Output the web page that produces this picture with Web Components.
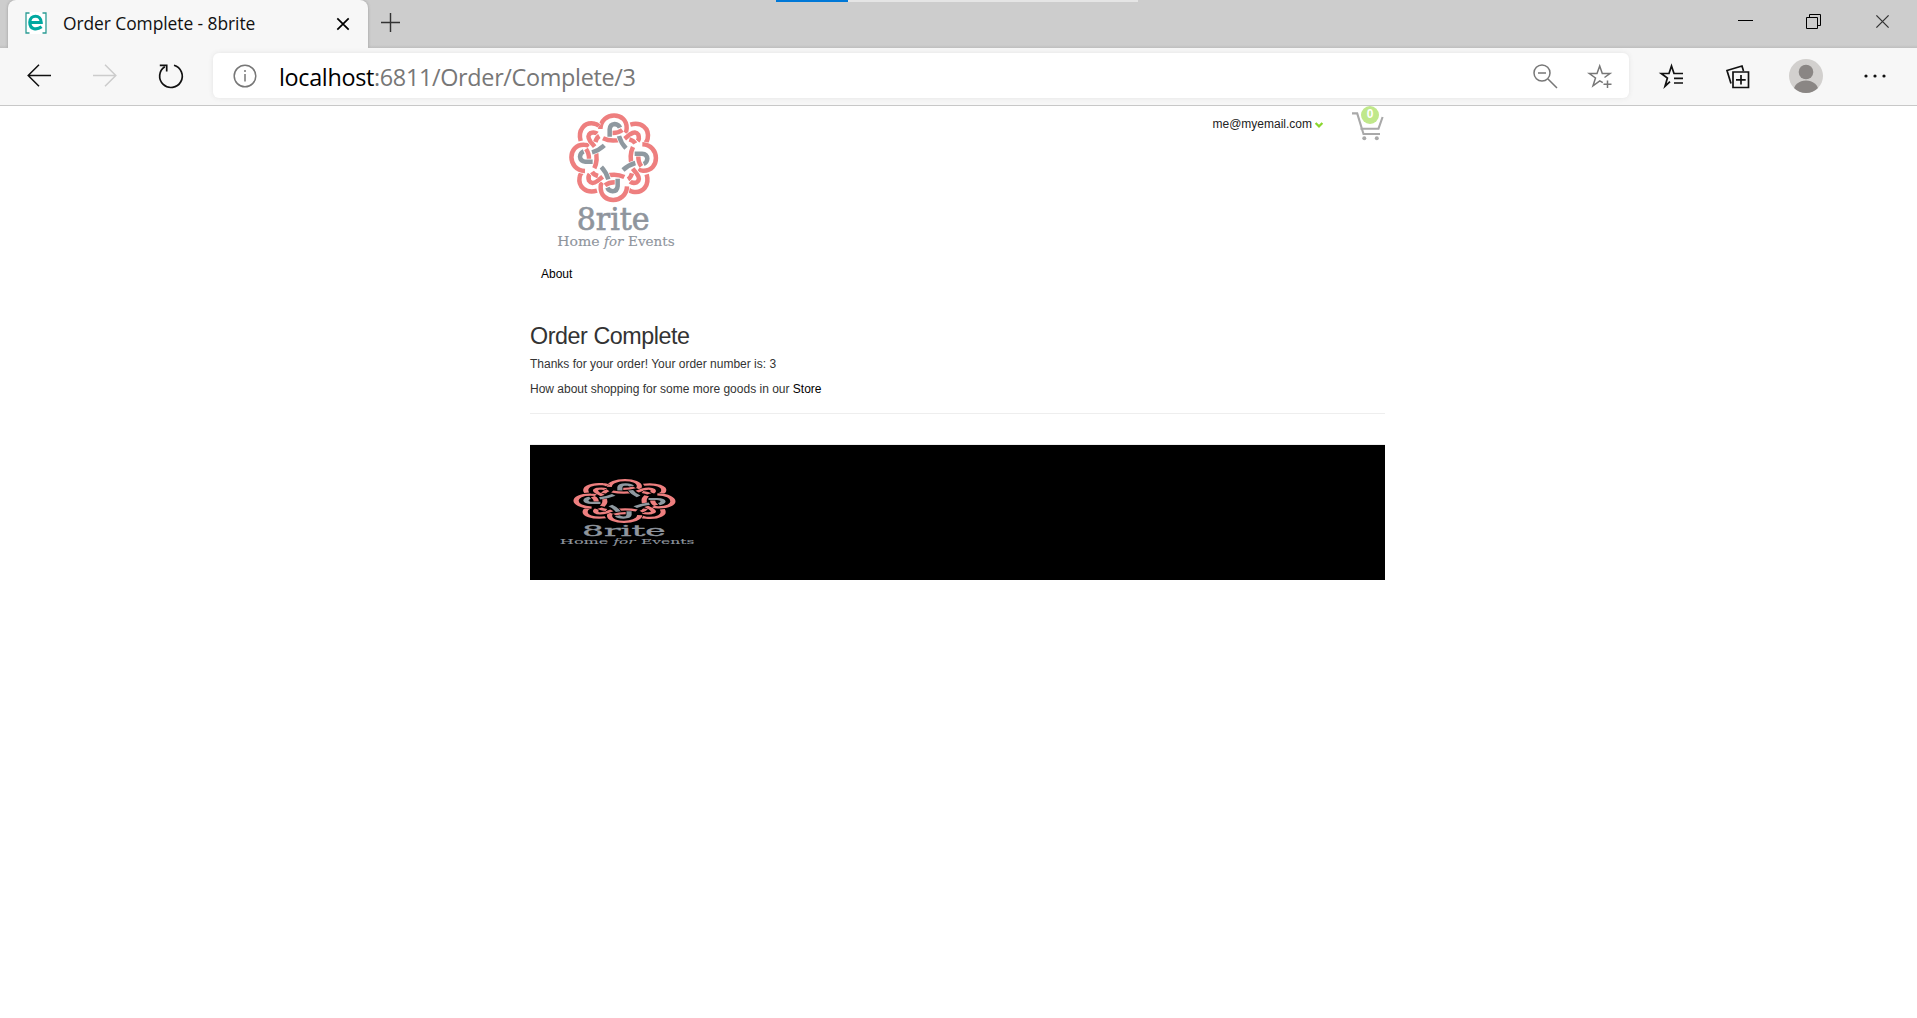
<!DOCTYPE html>
<html lang="en">
<head>
<meta charset="utf-8">
<title>Order Complete - 8brite</title>
<style>
html,body{margin:0;height:100%;background:#fff;overflow:hidden}
</style>
</head>
<body>
<browser-window></browser-window>
<script>
const define=(name,html,init)=>customElements.define(name,class extends HTMLElement{
  constructor(){super();this.attachShadow({mode:'open'}).innerHTML=html;if(init)init(this)}
});

const turn=[0,90,180,270];
const each=f=>turn.map(a=>`<g transform="rotate(${a} 221 158)">${f}</g>`).join('');
const strand=(d,c)=>`<path class="gap" d="${d}"/><path class="${c}" d="${d}"/>`;
const quarterRings=strand('M181 72C183 18 262 18 260 70Q260 79 256 84M245 103Q214 112 189 100','pink')
 +strand('M271 59C303 50 329 69 323 101Q322 108 316 114','pink');
const quarterHooks=strand('M237 93Q243 114 258 130','gray')
 +strand('M254 101L270 88Q287 76 295 89Q299 100 293 109','pink')
 +strand('M247 75Q234 85 215 84','pink')
 +strand('M209 95V73Q210 58 224 57Q236 58 240 68','gray')
 +strand('M286 115Q281 107 268 103','pink');

define('brand-logo',`<style>
:host{display:block}svg{display:block;width:100%;height:100%}
path{fill:none;stroke-width:13.5}.gap{stroke:var(--gap,#fff);stroke-width:17.5}.pink{stroke:#ee7f7f}.gray{stroke:#8f99a0}
text{font-family:"DejaVu Serif",serif;fill:#8f959d;stroke:#8f959d;stroke-width:.4}.name{stroke-width:2}
</style><svg viewBox="0 0 450 450" preserveAspectRatio="none">${each(quarterRings)}${each(quarterHooks)}
<text class="name" x="110" y="374" font-size="94" textLength="219" lengthAdjust="spacingAndGlyphs">8rite</text>
<text x="52" y="422" font-size="39" textLength="127" lengthAdjust="spacingAndGlyphs">Home</text>
<text x="192" y="422" font-size="39" font-style="italic" textLength="58" lengthAdjust="spacingAndGlyphs">for</text>
<text x="264" y="422" font-size="39" textLength="140" lengthAdjust="spacingAndGlyphs">Events</text></svg>`);

const shapes={
 back:['0 0 24 24','<path d="M24 11.5H1M12 .8L1.2 11.5L12 22.2"/>'],
 forward:['0 0 24 24','<path d="M0 11.5H23M12 .8L22.8 11.5L12 22.2"/>'],
 reload:['0 0 26 26','<path d="M16 2.3A11.3 11.3 0 1 1 6.8 3.7M1.8 2.4H8.7V8.5"/>'],
 info:['0 0 24 24','<circle cx="12" cy="12" r="10.8"/><path d="M12 10V17.5M12 6V8"/>'],
 close:['0 0 14 14','<path d="M1.3 1.3L12.7 12.7M12.7 1.3L1.3 12.7"/>'],
 plus:['0 0 20 20','<path d="M0 10H20M10 0V20"/>'],
 zoomout:['0 0 25 25','<circle cx="9" cy="9" r="8"/><path d="M5 9H13M15 15L24 24"/>'],
 staradd:['0 0 24 24','<path d="M14.8 17.6L11.8 15.8L5 20.8L7.5 13L1.3 8.5H9L11.7 1L14.3 8.5H22L16.5 12.5M19.5 15.5V23M15.5 19.3H23.5"/>'],
 starlist:['0 0 24 24','<path d="M10 16.6L5 21.2L7.4 13L1.3 8.5H9L11.5 1L14 8.5H23M14 13.3H23M14 18H23"/>'],
 collections:['0 0 24 24','<path d="M5 18.5L1 5.5L16 1L17.5 6M7 7H22.5V22.5H7ZM15 10V19.5M10 14.8H19.7"/>'],
 more:['0 0 22 6','<g stroke="none" fill="currentColor"><circle cx="2" cy="3" r="1.6"/><circle cx="11" cy="3" r="1.6"/><circle cx="20" cy="3" r="1.6"/></g>'],
 minimize:['0 0 15 15','<path d="M0 7.5H15"/>'],
 restore:['0 0 16 16','<path d="M.5 3.5H11.5V14.5H.5ZM3.5 3.5V.5H14.5V11.5H11.5"/>'],
 chevron:['0 0 8 6','<path d="M.6 1L4 4.4L7.4 1"/>'],
 cart:['0 0 32 29','<path d="M0 1.4H5.2L11.5 22H28M8.4 16.7H26.5L30.6 5"/><g stroke="none" fill="currentColor"><circle cx="12.3" cy="26.3" r="2"/><circle cx="24.8" cy="26.3" r="2"/></g>'],
 profile:['0 0 34 34','<defs><clipPath id="c"><circle cx="17" cy="17" r="17"/></clipPath></defs><g stroke="none" clip-path="url(#c)"><rect width="34" height="34" fill="#d2d0ce"/><circle cx="17" cy="13" r="7.3" fill="#8a8684"/><ellipse cx="17" cy="32" rx="12.4" ry="10.5" fill="#8a8684"/></g>'],
 favicon:['0 0 22 22','<rect width="22" height="22" fill="#fff" stroke="none"/><path stroke="#2a9b93" stroke-width="1.3" d="M4.5 1H1V21H4.5M17.5 1H21V21H17.5"/><path stroke="#00a8a0" stroke-width="3.2" d="M5 10.5H16.2C16.2 2.2 5 2.2 4.8 10.3C4.8 18 12 18.2 16.6 14.8"/>']
};
customElements.define('line-icon',class extends HTMLElement{
 constructor(){super();this.attachShadow({mode:'open'})}
 connectedCallback(){const [box,body]=shapes[this.getAttribute('name')];
  this.shadowRoot.innerHTML=`<style>:host{display:block;flex:none}svg{display:block;width:100%;height:100%;overflow:visible;fill:none;stroke:currentColor;stroke-width:var(--w,1.5)}</style><svg viewBox="${box}">${body}</svg>`}
});

define('tab-strip',`<style>
:host{display:flex;height:48px;box-sizing:border-box;background:linear-gradient(#cdcdcd 45px,#bebebe);padding-left:8px;position:relative;font:18px "Open Sans","Noto Sans",sans-serif}
.tab{width:360px;box-sizing:border-box;background:#f7f7f7;border-radius:8px 8px 0 0;padding:0 18px 0 17px;display:flex;align-items:center;box-shadow:0 0 3px #999;clip-path:inset(0 -4px 0 -4px)}
.tab span{font-size:17.4px;color:#111;margin:-2px 0 0 16px;flex:1;white-space:nowrap;letter-spacing:-.06px}
.new{width:19px;height:19px;margin:13px 0 0 13px;color:#333}
.controls{margin-left:auto;display:flex;gap:53px;padding:14px 27px 0 0;--w:1}
.controls line-icon{width:15px;height:15px}
.progress{position:absolute;left:776px;top:0;width:362px;height:2px;background:linear-gradient(90deg,#0078d7 72px,#e5e5e5 72px)}
</style><div class="tab"><line-icon name="favicon" style="width:22px;height:22px;margin-top:-2px"></line-icon><span>Order Complete - 8brite</span><line-icon name="close" style="width:14px;height:14px;--w:1.7"></line-icon></div>
<line-icon class="new" name="plus"></line-icon>
<div class="controls"><line-icon name="minimize" style="margin-top:-1px"></line-icon><line-icon name="restore" style="width:16px;height:16px"></line-icon><line-icon name="close" style="color:#333;--w:1.2"></line-icon></div><div class="progress"></div>`);

define('address-bar',`<style>
:host{display:flex;width:1416px;height:45px;box-sizing:border-box;align-items:center;background:#fff;border-radius:6px;box-shadow:0 0 5px #e3e3e3;padding:0 17px 0 20px;color:#777}
p{margin:3px auto 0 22px;font:23.4px "Open Sans","Noto Sans",sans-serif;white-space:nowrap;letter-spacing:-.33px}b{font-weight:400;color:#000}
</style><line-icon name="info" style="width:24px;height:24px"></line-icon><p><b>localhost</b>:6811/Order/Complete/3</p>
<line-icon name="zoomout" style="width:25px;height:25px;margin-top:1px"></line-icon><line-icon name="staradd" style="width:24px;height:24px;margin:2px 0 0 30px"></line-icon>`);

define('tool-bar',`<style>
:host{display:flex;height:58px;box-sizing:border-box;align-items:center;background:#f7f7f7;border-bottom:1px solid #c8c8c8;padding:0 31px 2px 27px;color:#111}
address-bar{margin:0 31px 0 29px}
</style><line-icon name="back" style="width:24px;height:24px"></line-icon>
<line-icon name="forward" style="width:24px;height:24px;margin-left:42px;color:#ccc"></line-icon>
<line-icon name="reload" style="width:26px;height:26px;margin-left:41px;--w:1.7"></line-icon>
<address-bar></address-bar>
<line-icon name="starlist" style="width:24px;height:24px;margin-top:2px;--w:1.7"></line-icon>
<line-icon name="collections" style="width:24px;height:24px;margin:2px 0 0 42px;--w:1.7"></line-icon>
<line-icon name="profile" style="width:34px;height:34px;margin-left:39px"></line-icon>
<line-icon name="more" style="width:22px;height:6px;margin-left:41px"></line-icon>`);

define('cart-button',`<style>
:host{display:block;position:relative;width:32px;height:29px;color:#a9a9a9;--w:2.1}
span{position:absolute;left:9px;top:-6px;width:18px;height:18px;border-radius:50%;background:#c0e88b;color:#fff;font:bold 12px/16px "Liberation Sans",sans-serif;text-align:center}
</style><line-icon name="cart"></line-icon><span>0</span>`);

define('site-header',`<style>
:host{display:flex;height:146px;padding-left:10px;justify-content:space-between}
brand-logo{width:150px;height:150px;margin-top:-1px}
.user{display:flex;height:29px;padding:6px 1px 0 0}
.mail{margin-top:3px;line-height:18px;color:#222}
line-icon{width:8px;height:6px;margin:10px 29px 0 3px;color:#8ad62e;--w:2.2}
</style><brand-logo></brand-logo><div class="user"><span class="mail">me@myemail.com</span><line-icon name="chevron"></line-icon><cart-button></cart-button></div>`);

define('site-nav',`<style>:host{display:block;padding:13px 11px 0;height:57px;line-height:18px;color:#000}</style>About`);

define('order-summary',`<style>
:host{display:block;height:91px;border-bottom:1px solid #eee}
h2{margin:0 0 5px;font-weight:400;font-size:23.3px;line-height:28px;height:28px;letter-spacing:-.44px;color:#333}
p{margin:0 0 7px;line-height:18px;white-space:nowrap}b{font-weight:400;color:#000}
</style><h2>Order Complete</h2><p>Thanks for your order! Your order number is: 3</p><p>How about shopping for some more goods in our <b>Store</b></p>`);

define('site-footer',`<style>
:host{display:flow-root;margin-top:30px;border-top:1px solid #eee;height:135px;background:#000;background-clip:padding-box;--gap:#000}
brand-logo{width:172px;height:74px;margin:30px 0 0 10px}
</style><brand-logo></brand-logo>`);

define('store-page',`<style>
:host{display:block;width:855px;margin-left:530px;font:12px "Liberation Sans",Arial,sans-serif;color:#333}
</style><site-header></site-header><site-nav></site-nav><order-summary></order-summary><site-footer></site-footer>`);

define('browser-window',`<style>:host{display:block;width:1917px;height:1018px;overflow:hidden;background:#fff}</style><tab-strip></tab-strip><tool-bar></tool-bar><store-page></store-page>`);
</script>
</body>
</html>
